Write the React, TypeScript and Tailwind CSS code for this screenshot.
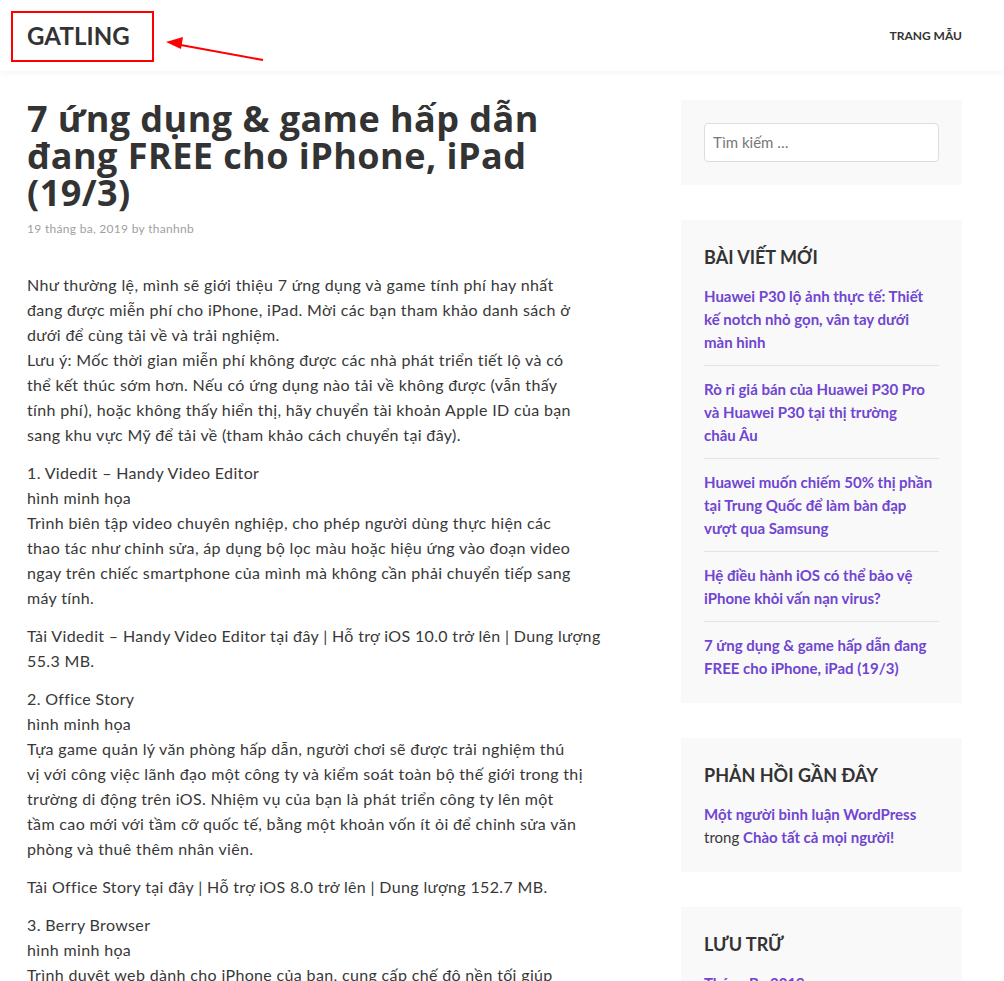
import React from "react";

const P1 = [
  "Như thường lệ, mình sẽ giới thiệu 7 ứng dụng và game tính phí hay nhất",
  "đang được miễn phí cho iPhone, iPad. Mời các bạn tham khảo danh sách ở",
  "dưới để cùng tải về và trải nghiệm.",
  "Lưu ý: Mốc thời gian miễn phí không được các nhà phát triển tiết lộ và có",
  "thể kết thúc sớm hơn. Nếu có ứng dụng nào tải về không được (vẫn thấy",
  "tính phí), hoặc không thấy hiển thị, hãy chuyển tài khoản Apple ID của bạn",
  "sang khu vực Mỹ để tải về (tham khảo cách chuyển tại đây).",
];
const P2 = [
  "1. Videdit – Handy Video Editor",
  "hình minh họa",
  "Trình biên tập video chuyên nghiệp, cho phép người dùng thực hiện các",
  "thao tác như chỉnh sửa, áp dụng bộ lọc màu hoặc hiệu ứng vào đoạn video",
  "ngay trên chiếc smartphone của mình mà không cần phải chuyển tiếp sang",
  "máy tính.",
];
const P3 = [
  "Tải Videdit – Handy Video Editor tại đây | Hỗ trợ iOS 10.0 trở lên | Dung lượng",
  "55.3 MB.",
];
const P4 = [
  "2. Office Story",
  "hình minh họa",
  "Tựa game quản lý văn phòng hấp dẫn, người chơi sẽ được trải nghiệm thú",
  "vị với công việc lãnh đạo một công ty và kiểm soát toàn bộ thế giới trong thị",
  "trường di động trên iOS. Nhiệm vụ của bạn là phát triển công ty lên một",
  "tầm cao mới với tầm cỡ quốc tế, bằng một khoản vốn ít ỏi để chỉnh sửa văn",
  "phòng và thuê thêm nhân viên.",
];
const P5 = ["Tải Office Story tại đây | Hỗ trợ iOS 8.0 trở lên | Dung lượng 152.7 MB."];
const P6 = [
  "3. Berry Browser",
  "hình minh họa",
  "Trình duyệt web dành cho iPhone của bạn, cung cấp chế độ nền tối giúp",
];

const recent = [
  ["Huawei P30 lộ ảnh thực tế: Thiết", "kế notch nhỏ gọn, vân tay dưới", "màn hình"],
  ["Rò rỉ giá bán của Huawei P30 Pro", "và Huawei P30 tại thị trường", "châu Âu"],
  ["Huawei muốn chiếm 50% thị phần", "tại Trung Quốc để làm bàn đạp", "vượt qua Samsung"],
  ["Hệ điều hành iOS có thể bảo vệ", "iPhone khỏi vấn nạn virus?"],
  ["7 ứng dụng & game hấp dẫn đang", "FREE cho iPhone, iPad (19/3)"],
];

function Para({ lines }: { lines: string[] }) {
  return (
    <p className="mb-[13px]">
      {lines.map((l, i) => (
        <span key={i} className="block whitespace-nowrap">
          {l}
        </span>
      ))}
    </p>
  );
}

export default function App() {
  const font = { fontFamily: "Lato, 'Noto Sans', sans-serif" };
  return (
    <div className="relative min-h-[981px] bg-white text-[#383838] overflow-hidden" style={font}>
      {/* header */}
      <header className="relative z-10 h-[71px] bg-white shadow-[0_3px_6px_rgba(0,0,0,0.035)] flex items-center justify-between pl-[27px] pr-[42px]">
        <div className="text-[24px] font-bold tracking-[0.1px] text-[#333] leading-none">GATLING</div>
        <nav className="text-[12px] font-bold text-[#333]">TRANG MẪU</nav>
      </header>

      {/* annotation */}
      <div className="absolute left-[11px] top-[11px] w-[143px] h-[51px] border-2 border-[#ff0000] z-20" />
      <svg className="absolute left-0 top-0 z-20" width="300" height="80">
        <line x1="263" y1="60" x2="178" y2="44.5" stroke="#ff0000" strokeWidth="2" />
        <polygon points="166,42 183,37 181,49" fill="#ff0000" />
      </svg>

      <div className="flex pl-[27px] pr-[42px] pt-[29px] gap-[91px]">
        <main className="w-[563px] shrink-0">
          <h1
            className="text-[36px] font-bold leading-[37px] text-[#333] tracking-[0.45px]"
            style={{ fontFamily: "'Open Sans', 'Noto Sans', sans-serif" }}
          >
            <span className="block whitespace-nowrap">7 ứng dụng &amp; game hấp dẫn</span>
            <span className="block whitespace-nowrap">đang FREE cho iPhone, iPad</span>
            <span className="block whitespace-nowrap">(19/3)</span>
          </h1>
          <div className="mt-[9px] text-[12px] leading-[18px] text-[#a0a0a0] tracking-[0.3px]">19 tháng ba, 2019 by thanhnb</div>
          <div className="mt-[34px] text-[16px] leading-[25px] tracking-[0.35px]">
            <Para lines={P1} />
            <Para lines={P2} />
            <Para lines={P3} />
            <Para lines={P4} />
            <Para lines={P5} />
            <Para lines={P6} />
          </div>
        </main>

        <aside className="w-[281px] shrink-0 flex flex-col gap-[35px]">
          <div className="bg-[#f9f9f9] p-[23px]">
            <div className="h-[39px] rounded-[4px] border border-[#dddddd] bg-white flex items-center px-[8px] text-[15px] text-[#777]">
              Tìm kiếm …
            </div>
          </div>

          <div className="bg-[#f9f9f9] p-[23px]">
            <h2 className="text-[18px] font-bold leading-[28px] text-[#333] mb-[14px]">BÀI VIẾT MỚI</h2>
            <ul>
              {recent.map((r, i) => (
                <li
                  key={i}
                  className={
                    "text-[15px] font-bold leading-[23px] text-[#6f45d1] " +
                    (i === 0 ? "pt-0 " : "pt-[12px] ") +
                    (i === recent.length - 1 ? "pb-0" : "pb-[11px] border-b border-[#e4e4e4]")
                  }
                >
                  {r.map((l, j) => (
                    <span key={j} className="block whitespace-nowrap">
                      {l}
                    </span>
                  ))}
                </li>
              ))}
            </ul>
          </div>

          <div className="bg-[#f9f9f9] p-[23px]">
            <h2 className="text-[18px] font-bold leading-[28px] text-[#333] mb-[14px]">PHẢN HỒI GẦN ĐÂY</h2>
            <div className="text-[15px] leading-[23px] text-[#383838]">
              <span className="block whitespace-nowrap font-bold text-[#6f45d1]">Một người bình luận WordPress</span>
              <span className="block whitespace-nowrap">
                trong <span className="font-bold text-[#6f45d1]">Chào tất cả mọi người!</span>
              </span>
            </div>
          </div>

          <div className="bg-[#f9f9f9] p-[23px]">
            <h2 className="text-[18px] font-bold leading-[28px] text-[#333] mb-[14px]">LƯU TRỮ</h2>
            <div className="text-[15px] font-bold leading-[23px] text-[#6f45d1]">Tháng Ba 2019</div>
          </div>
        </aside>
      </div>
    </div>
  );
}
